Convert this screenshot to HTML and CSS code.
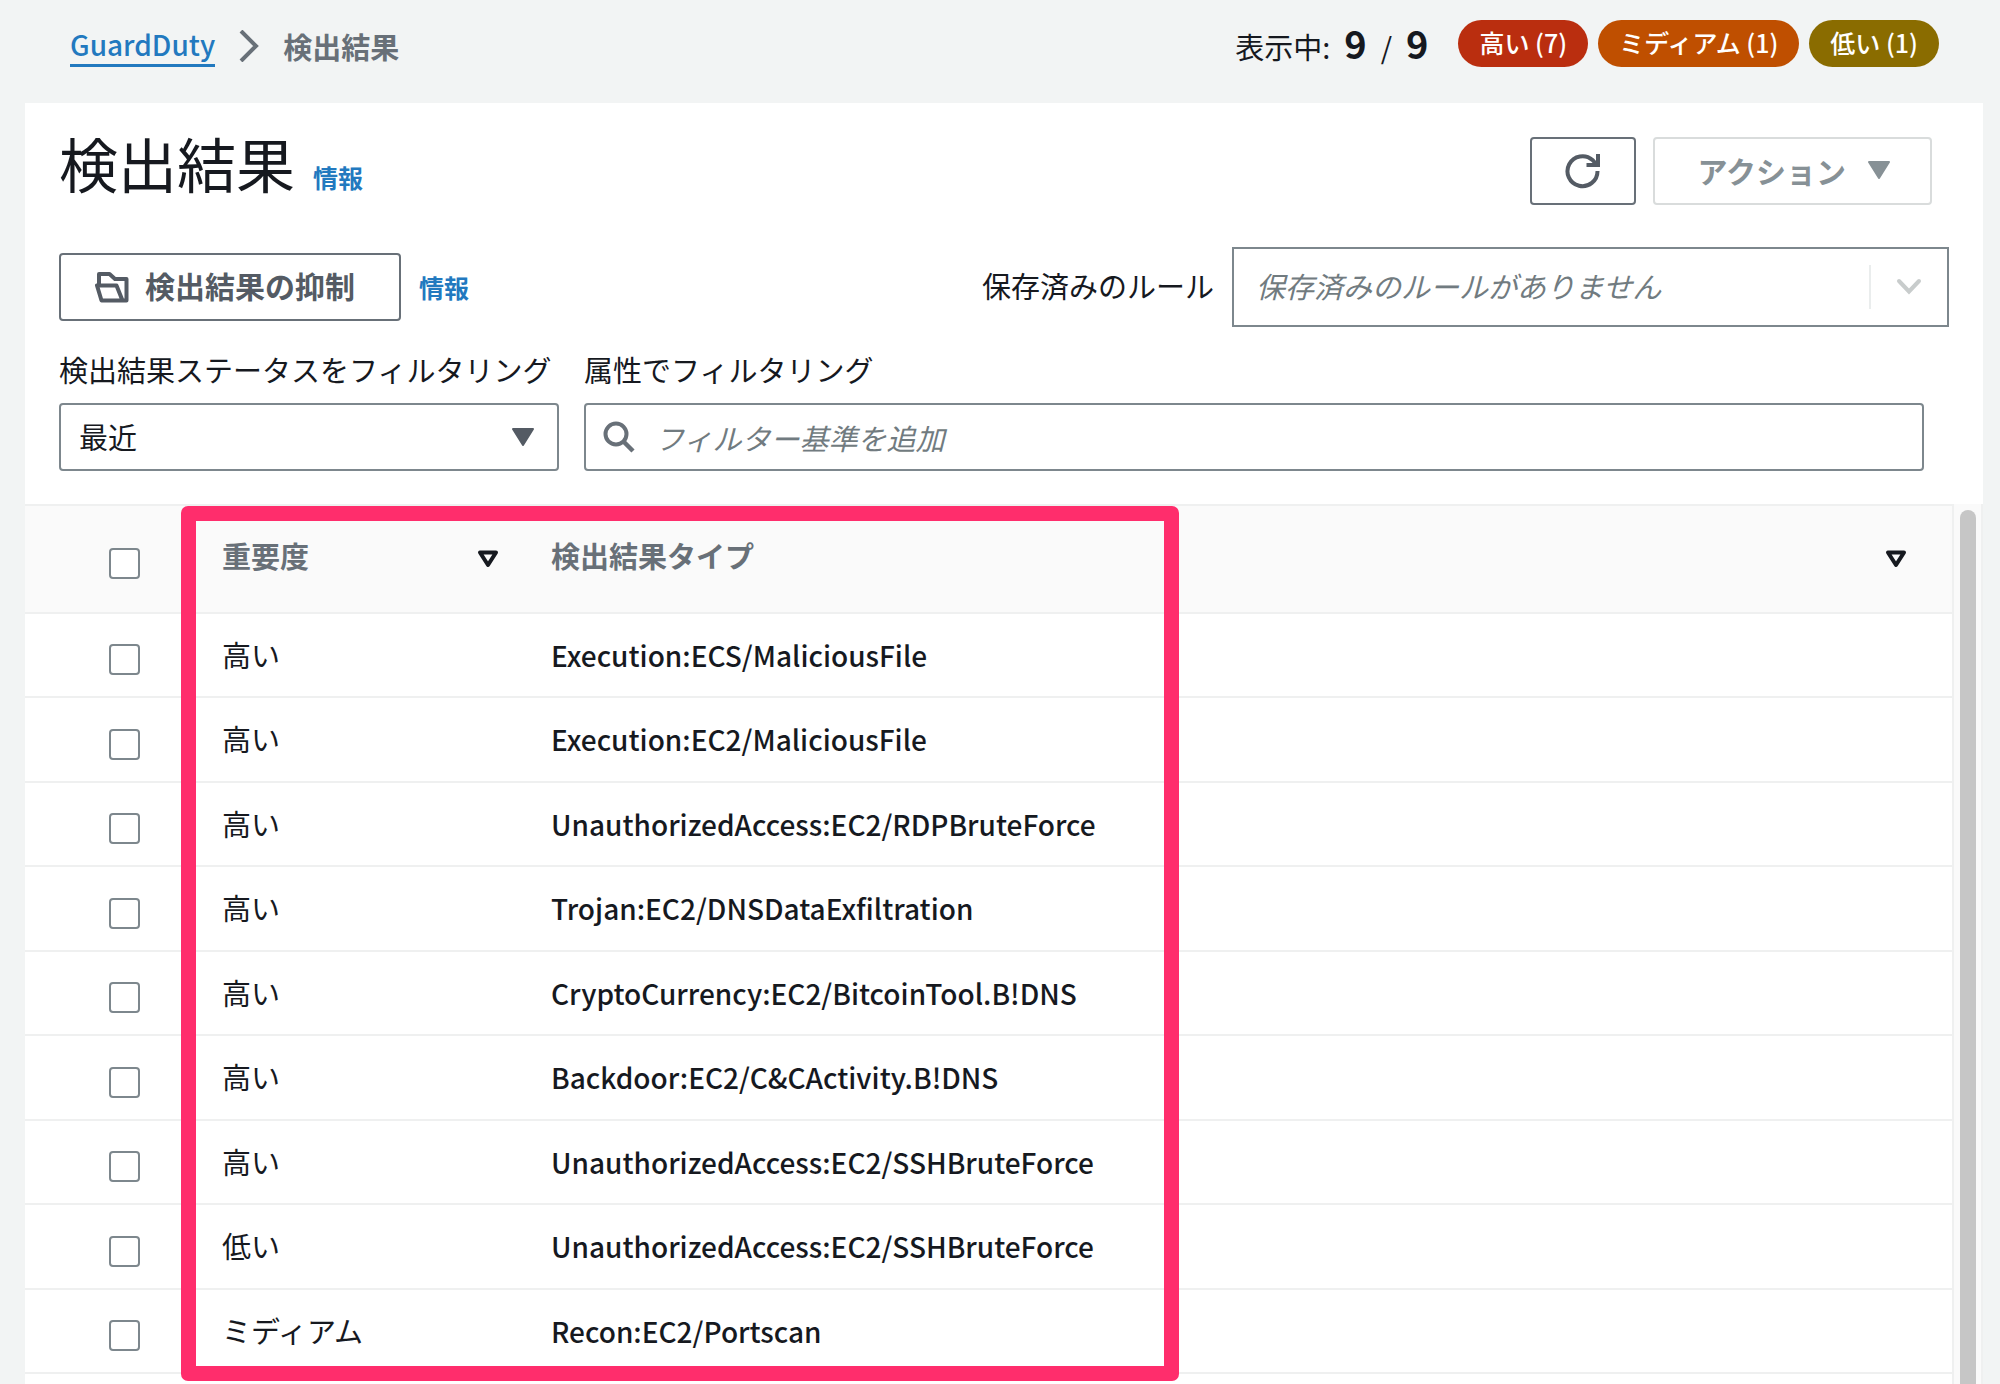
FILE: index.html
```html
<!DOCTYPE html>
<html lang="ja">
<head>
<meta charset="utf-8">
<meta name="viewport" content="width=device-width, initial-scale=1">
<title>GuardDuty - 検出結果</title>
<link rel="stylesheet" href="styles.css">
</head>
<body>
<header class="topbar">
  <nav class="breadcrumb" aria-label="パンくずリスト">
    <a class="crumb-link" href="#">GuardDuty</a>
    <svg class="crumb-sep" viewBox="0 0 20 32" aria-hidden="true"><path d="M2 1 17 16 2 31" fill="none" stroke="#687078" stroke-width="4"/></svg>
    <span class="crumb-current">検出結果</span>
  </nav>
  <div class="summary">
    <p class="showing"><span>表示中:</span><b>9</b><span>/</span><b>9</b></p>
    <div class="badges">
      <span class="badge badge-high">高い (7)</span>
      <span class="badge badge-medium">ミディアム (1)</span>
      <span class="badge badge-low">低い (1)</span>
    </div>
  </div>
</header>
<main class="panel">
  <div class="title-row">
    <h1 class="title">検出結果</h1>
    <a class="info" href="#">情報</a>
    <div class="actions">
      <button class="btn btn-refresh" type="button" aria-label="更新">
        <svg class="icon-refresh" viewBox="0 0 36 36" aria-hidden="true"><path d="M32.500 18A15 15 0 1 1 27.500 7L32 12M33 1V12H21.500" fill="none" stroke="#545b64" stroke-width="4"/></svg>
      </button>
      <button class="btn btn-actions" type="button" disabled>アクション
        <svg class="caret" viewBox="0 0 22 18" aria-hidden="true"><path d="M1 1H21L11 17Z" fill="#879196" stroke="#879196" stroke-width="2" stroke-linejoin="round"/></svg>
      </button>
    </div>
  </div>
  <div class="rules-row">
    <button class="btn btn-suppress" type="button">
      <svg class="icon-folder" viewBox="0 0 34 32" aria-hidden="true"><path d="M4 14V3H14.500L20 8H31.500V29.500H26M2 14.500H21.500L27.500 29.500H6.500Z" fill="none" stroke="#545b64" stroke-width="4" stroke-linejoin="round"/></svg>
      <span class="btn-text">検出結果の抑制</span>
    </button>
    <a class="info" href="#">情報</a>
    <label class="rules-label" for="rules">保存済みのルール</label>
    <div class="rules-box">
      <input class="field-input" id="rules" type="text" role="combobox" aria-expanded="false" placeholder="保存済みのルールがありません">
      <svg class="chevron" viewBox="0 0 26 18" aria-hidden="true"><path d="M3 3 13 13.500 23 3" fill="none" stroke="#c8cccc" stroke-width="4" stroke-linecap="round"/></svg>
    </div>
  </div>
  <div class="filter-row">
    <div class="field field-status">
      <label for="status">検出結果ステータスをフィルタリング</label>
      <div class="select-wrap">
        <select class="select" id="status"><option>最近</option></select>
        <svg class="caret" viewBox="0 0 22 18" aria-hidden="true"><path d="M1 1H21L11 17Z" fill="#545b64" stroke="#545b64" stroke-width="2" stroke-linejoin="round"/></svg>
      </div>
    </div>
    <div class="field field-attr">
      <label for="attr">属性でフィルタリング</label>
      <div class="search-box">
        <svg class="icon-search" viewBox="0 0 32 32" aria-hidden="true"><circle cx="13" cy="13" r="10.500" fill="none" stroke="#687078" stroke-width="4"/><path d="M20 20 30 30" stroke="#687078" stroke-width="4.500"/></svg>
        <input class="field-input" id="attr" type="text" placeholder="フィルター基準を追加">
      </div>
    </div>
  </div>
  <section class="results">
    <table class="table">
      <colgroup><col class="col-check"><col class="col-severity"><col></colgroup>
      <thead>
        <tr>
          <th class="check"><input class="checkbox" type="checkbox" aria-label="すべて選択"></th>
          <th><div class="th-inner">重要度<svg class="sort" viewBox="0 0 22 18" aria-hidden="true"><path d="M3 2.500H19L11 15Z" fill="none" stroke="#16191f" stroke-width="4" stroke-linejoin="round"/></svg></div></th>
          <th class="th-last"><div class="th-inner">検出結果タイプ<svg class="sort" viewBox="0 0 22 18" aria-hidden="true"><path d="M3 2.500H19L11 15Z" fill="none" stroke="#16191f" stroke-width="4" stroke-linejoin="round"/></svg></div></th>
        </tr>
      </thead>
      <tbody>
        <tr><td class="check"><input class="checkbox" type="checkbox" aria-label="行 1 を選択"></td><td>高い</td><td class="type">Execution:ECS/MaliciousFile</td></tr>
        <tr><td class="check"><input class="checkbox" type="checkbox" aria-label="行 2 を選択"></td><td>高い</td><td class="type">Execution:EC2/MaliciousFile</td></tr>
        <tr><td class="check"><input class="checkbox" type="checkbox" aria-label="行 3 を選択"></td><td>高い</td><td class="type">UnauthorizedAccess:EC2/RDPBruteForce</td></tr>
        <tr><td class="check"><input class="checkbox" type="checkbox" aria-label="行 4 を選択"></td><td>高い</td><td class="type">Trojan:EC2/DNSDataExfiltration</td></tr>
        <tr><td class="check"><input class="checkbox" type="checkbox" aria-label="行 5 を選択"></td><td>高い</td><td class="type">CryptoCurrency:EC2/BitcoinTool.B!DNS</td></tr>
        <tr><td class="check"><input class="checkbox" type="checkbox" aria-label="行 6 を選択"></td><td>高い</td><td class="type">Backdoor:EC2/C&amp;CActivity.B!DNS</td></tr>
        <tr><td class="check"><input class="checkbox" type="checkbox" aria-label="行 7 を選択"></td><td>高い</td><td class="type">UnauthorizedAccess:EC2/SSHBruteForce</td></tr>
        <tr><td class="check"><input class="checkbox" type="checkbox" aria-label="行 8 を選択"></td><td>低い</td><td class="type">UnauthorizedAccess:EC2/SSHBruteForce</td></tr>
        <tr><td class="check"><input class="checkbox" type="checkbox" aria-label="行 9 を選択"></td><td>ミディアム</td><td class="type">Recon:EC2/Portscan</td></tr>
      </tbody>
    </table>
    <div class="scroll-track"><div class="scroll-thumb"></div></div>
    <div class="highlight"></div>
  </section>
</main>
</body>
</html>
```
FILE: styles.css
```css
* { box-sizing: border-box; }

body {
  margin: 0;
  min-height: 100vh;
  display: flex;
  flex-direction: column;
  background: #f2f4f4;
  color: #16191f;
  font-family: "Noto Sans CJK JP", "Noto Sans", sans-serif;
  font-size: 29px;
  line-height: 40px;
}

button, input, select { font: inherit; color: inherit; }

/* Top bar */
.topbar {
  display: flex;
  justify-content: space-between;
  align-items: flex-start;
  height: 103px;
  padding: 20px 61px 0 70px;
}
.breadcrumb { display: flex; align-items: center; gap: 24px; padding-top: 4px; }
.crumb-link {
  color: #2279bf;
  font-size: 28px;
  font-weight: 500;
  text-decoration: none;
  border-bottom: 3px solid #2279bf;
}
.crumb-sep { width: 20px; height: 32px; }
.crumb-current { color: #687078; font-weight: 700; }
.summary { display: flex; gap: 30px; }
.showing { display: flex; align-items: baseline; gap: 14px; margin: 0; padding-top: 3px; }
.showing b { font-size: 38px; }
.badges { display: flex; gap: 10px; }
.badge {
  height: 47px;
  padding: 0 21px;
  border-radius: 24px;
  color: #fff;
  font-size: 25px;
  font-weight: 500;
  line-height: 45px;
}
.badge-high { background: #ba2e0f; }
.badge-medium { background: #bf4f00; }
.badge-low { background: #8a6c00; }

/* Panel */
.panel {
  flex: 1;
  display: flex;
  flex-direction: column;
  margin: 0 17px 0 25px;
  background: #fff;
}
.title-row {
  display: flex;
  align-items: baseline;
  padding: 20px 51px 0 34px;
  gap: 18px;
}
.title { margin: 0; font-size: 59px; font-weight: 400; line-height: 80px; }
.info { color: #2279bf; font-size: 25px; font-weight: 700; text-decoration: none; }
.actions { display: flex; gap: 17px; margin-left: auto; align-self: flex-start; padding-top: 14px; }
.btn {
  display: flex;
  align-items: center;
  justify-content: center;
  height: 68px;
  border: 2px solid #687078;
  border-radius: 4px;
  background: #fff;
  color: #545b64;
  font-size: 30px;
  font-weight: 700;
}
.btn-refresh { padding: 0 33px; }
.icon-refresh { width: 36px; height: 36px; }
.btn-actions { gap: 22px; border-color: #d9dcdc; color: #879196; padding: 0 40px 3px 43px; }
.btn-text { padding-bottom: 4px; }
.caret { width: 22px; height: 18px; }

.rules-row {
  display: flex;
  align-items: center;
  margin-top: 42px;
  padding: 0 34px;
  gap: 18px;
}
.btn-suppress { gap: 16px; padding: 0 44px 0 34px; }
.icon-folder { width: 34px; height: 32px; }
.rules-label { margin-left: auto; padding-bottom: 4px; }
.rules-box {
  display: flex;
  align-items: center;
  width: 717px;
  height: 80px;
  padding-left: 22px;
  padding-right: 25px;
  border: 2px solid #7d878d;
  background: #fff;
}
.field-input {
  flex: 1;
  min-width: 0;
  height: 44px;
  padding: 0 0 4px;
  border: 0;
  outline: 0;
  background: transparent;
}
.field-input::placeholder { color: #717b80; font-style: italic; opacity: 1; }
.rules-box .field-input { border-right: 2px solid #eaeded; }
.chevron { width: 26px; height: 18px; margin-left: 25px; }

.filter-row { display: flex; gap: 25px; padding: 22px 59px 33px 34px; }
.field { display: flex; flex-direction: column; gap: 14px; }
.field-status { width: 500px; white-space: nowrap; }
.field-attr { flex: 1; }
.select-wrap { display: grid; align-items: center; }
.select-wrap > * { grid-area: 1 / 1; }
.select-wrap .caret { justify-self: end; margin-right: 25px; pointer-events: none; }
.select, .search-box {
  width: 100%;
  height: 68px;
  border: 2px solid #7d878d;
  border-radius: 4px;
  background: #fff;
}
.select { appearance: none; padding: 0 18px 3px; }
.search-box { display: flex; align-items: center; gap: 20px; padding: 0 17px; }
.search-box .field-input { padding-bottom: 1px; }
.icon-search { width: 32px; height: 32px; }

/* Results table */
.results { position: relative; flex: 1; display: flex; align-items: stretch; }
.table {
  flex: 1;
  align-self: flex-start;
  table-layout: fixed;
  border-collapse: separate;
  border-spacing: 0;
}
.col-check { width: 177px; }
.col-severity { width: 329px; }
.table th, .table td {
  padding: 0 32px 3px 20px;
  border-bottom: 2px solid #eff0f0;
  text-align: left;
}
.table th {
  height: 110px;
  padding-bottom: 8px;
  border-top: 2px solid #eff0f0;
  background: #fafafa;
  color: #687078;
}
.table .th-last { padding-right: 45px; }
.th-inner { display: flex; justify-content: space-between; align-items: center; }
.sort { width: 22px; height: 18px; margin-top: 7px; }
.table td { height: 84px; }
.table tr:nth-child(even) td { height: 85px; }
.table .type { padding-bottom: 1px; font-size: 28px; font-weight: 500; }
.table .check { padding: 9px 0 0 84px; }
.checkbox {
  appearance: none;
  display: block;
  width: 31px;
  height: 31px;
  margin: 0;
  border: 2px solid #7d878d;
  border-radius: 4px;
  background: #fff;
}
.scroll-track {
  width: 31px;
  padding: 6px 5px 0 6px;
  border: 2px solid #eff0f0;
  border-width: 0 2px;
  background: #fafafa;
  display: flex;
}
.scroll-thumb { flex: 1; border-radius: 9px 9px 0 0; background: #c6c6c6; }

/* Marker frame around the severity and type columns */
.highlight {
  position: absolute;
  top: 2px;
  left: 156px;
  width: 998px;
  height: 875px;
  border: 15px solid #ff2d6c;
  border-radius: 7px;
  pointer-events: none;
}
```
